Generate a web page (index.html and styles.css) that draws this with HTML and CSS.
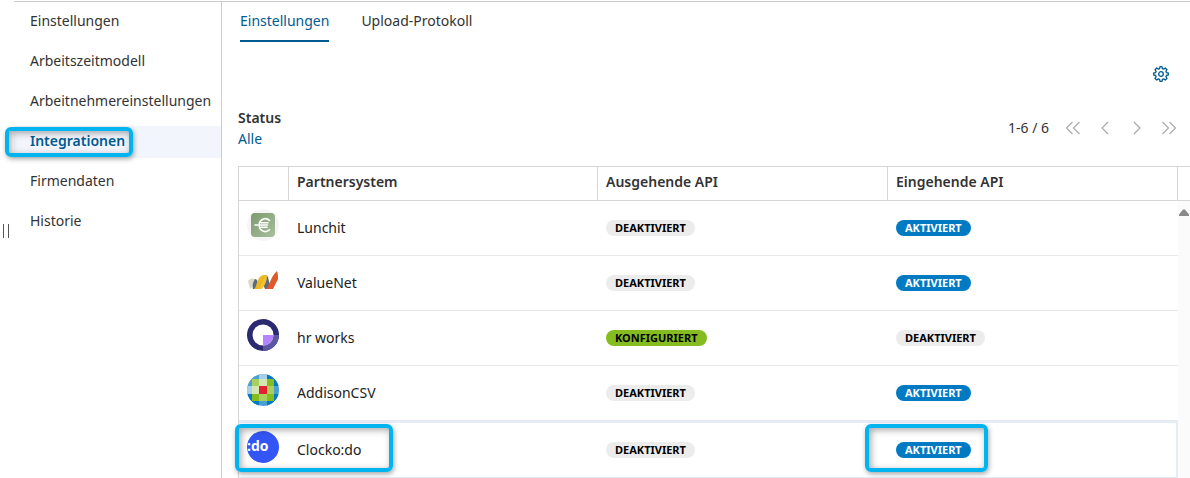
FILE: index.html
```html
<!DOCTYPE html>
<html lang="de">
<head>
<meta charset="utf-8">
<meta name="viewport" content="width=device-width, initial-scale=1">
<title>Integrationen</title>
<link rel="stylesheet" href="styles.css">
</head>
<body>
<div class="gutter"><span class="grip"></span></div>
<div class="app">
  <nav class="sidebar" aria-label="Bereiche">
    <a class="nav-item" href="#">Einstellungen</a>
    <a class="nav-item" href="#">Arbeitszeitmodell</a>
    <a class="nav-item" href="#">Arbeitnehmereinstellungen</a>
    <a class="nav-item active" href="#" aria-current="page">Integrationen<span class="marker marker-nav"></span></a>
    <a class="nav-item" href="#">Firmendaten</a>
    <a class="nav-item" href="#">Historie</a>
  </nav>
  <main class="main">
    <div class="tabs">
      <a class="tab selected" href="#">Einstellungen</a>
      <a class="tab" href="#">Upload-Protokoll</a>
    </div>
    <div class="tools">
      <button class="icon-button" type="button" aria-label="Konfigurieren">
        <svg width="16" height="16" viewBox="0 0 16 16" fill="none" stroke="currentColor" stroke-width="1.3" stroke-linejoin="round"><path d="M6.6 2.6 7 .7h2l.4 1.9 1.2.5 1.7-1.1 1.7 1.7-1.1 1.7.5 1.2 1.9.4v2l-1.9.4-.5 1.2 1.1 1.7-1.7 1.7-1.7-1.1-1.2.5-.4 1.9H7l-.4-1.9-1.2-.5L3.700 14 2 12.300l1.100-1.700-.5-1.200L.7 9V7l1.900-.4.500-1.200L2 3.700 3.700 2l1.700 1.100z"/><circle cx="8" cy="8" r="2.300"/></svg>
      </button>
    </div>
    <div class="filterbar">
      <div class="filter">
        <span class="filter-label" id="status-label">Status</span>
        <button class="filter-value" type="button" aria-describedby="status-label">Alle</button>
      </div>
      <div class="pager">
        <span class="range">1-6 / 6</span>
        <button class="page-button" type="button" aria-label="Erste Seite"><svg width="16" height="14" viewBox="0 0 16 14"><path d="M7.500 1 1.500 7l6 6M14.500 1l-6 6 6 6"/></svg></button>
        <button class="page-button" type="button" aria-label="Vorherige Seite"><svg width="16" height="14" viewBox="0 0 16 14"><path d="M11 1 5 7l6 6"/></svg></button>
        <button class="page-button" type="button" aria-label="Nächste Seite"><svg width="16" height="14" viewBox="0 0 16 14"><path d="m5 1 6 6-6 6"/></svg></button>
        <button class="page-button" type="button" aria-label="Letzte Seite"><svg width="16" height="14" viewBox="0 0 16 14"><path d="m1.500 1 6 6-6 6M8.500 1l6 6-6 6"/></svg></button>
      </div>
    </div>
    <table class="grid">
      <colgroup><col class="col-logo"><col class="col-name"><col><col><col class="col-scroll"></colgroup>
      <thead>
        <tr><th></th><th scope="col">Partnersystem</th><th scope="col">Ausgehende API</th><th scope="col">Eingehende API</th><th></th></tr>
      </thead>
      <tbody>
        <tr>
          <td class="logo"><svg width="32" height="32" viewBox="0 0 32 32"><defs><linearGradient id="lunch" x1="0" y1="0" x2="1" y2="1"><stop offset="0" stop-color="#7b9a6e"/><stop offset="1" stop-color="#a9bf9f"/></linearGradient></defs><circle cx="16" cy="16" r="16" fill="#f5f5f5"/><rect x="4" y="4" width="24" height="24" rx="4" fill="url(#lunch)"/><path d="M22.500 11.500a6 6 0 0 0-10.200 3M12.300 17.500a6 6 0 0 0 10.200 3.300M8 16h12.500M14 13.800h7M14 18.200h6" fill="none" stroke="#fff" stroke-width="1.600" stroke-linecap="round"/></svg></td>
          <td>Lunchit</td>
          <td><span class="badge">DEAKTIVIERT</span></td>
          <td><span class="badge on">AKTIVIERT</span></td>
          <td class="scroll" rowspan="5"><button class="scroll-up" type="button" aria-label="Nach oben"><svg width="10" height="7" viewBox="0 0 10 7"><path d="M4 .5h2l4 5V7H0V5.500z" fill="#8a8a8a"/></svg></button></td>
        </tr>
        <tr>
          <td class="logo"><svg width="32" height="32" viewBox="0 0 32 32"><path d="M1 17c1-2 4-3 7-2l-3 8-2 2z" fill="#dcd6c4"/><path d="M8 15c3 0 3 5 4 10H6c-1-3 0-7 2-10z" fill="#5b6b7c"/><path d="M7 25c3-2 3-12 8-13.500 2-.6 4-.5 5 0L14 24l-2 1z" fill="#efb71f"/><path d="M20 11.500c2 2 2 9 4 13.500h-6c-1-2-2-5-2-6z" fill="#5b6b7c"/><path d="m15 19 3-6 2-1.500c0 5-2 10-5 13.500h-3z" fill="#f3c22e"/><path d="M19 25c3-3 5-12 10-17l1-1c1 3 1 5 1 8l-5 10z" fill="#e0592b"/></svg></td>
          <td>ValueNet</td>
          <td><span class="badge">DEAKTIVIERT</span></td>
          <td><span class="badge on">AKTIVIERT</span></td>
        </tr>
        <tr>
          <td class="logo"><svg width="32" height="32" viewBox="0 0 32 32"><circle cx="16" cy="16" r="16" fill="#2b2a70"/><path d="M16 16h16a16 16 0 0 1-16 16z" fill="#5b57a4"/><circle cx="16" cy="16" r="10.500" fill="#fff"/><path d="M16 16h10.500A10.500 10.500 0 0 1 16 26.500z" fill="#b583ff"/></svg></td>
          <td>hr works</td>
          <td><span class="badge configured">KONFIGURIERT</span></td>
          <td><span class="badge">DEAKTIVIERT</span></td>
        </tr>
        <tr>
          <td class="logo"><svg width="32" height="32" viewBox="0 0 32 32"><defs><clipPath id="globe"><circle cx="16" cy="16" r="16"/></clipPath></defs><g clip-path="url(#globe)"><path fill="#4a9fd3" d="M0 0h32v32H0z"/><path fill="#a6cfea" d="M12 0h8v5h-8zM0 12h5v8H0z"/><path fill="#007ac3" d="M20 0h7v5h-7zM27 5h5v7h-5zM27 20h5v7h-5zM20 27h7v5h-7zM5 27h7v5H5zM0 20h5v7H0z"/><path fill="#85bc20" d="M5 5h22v22H5z"/><path fill="#d3e6b3" d="M12 5h8v7h-8zM5 12h7v8H5z"/><path fill="#a9cf5f" d="M5 5h7v7H5zM20 12h7v8h-7zM12 20h8v7h-8z"/><path fill="#e5202e" d="M12 12h8v8h-8z"/></g></svg></td>
          <td>AddisonCSV</td>
          <td><span class="badge">DEAKTIVIERT</span></td>
          <td><span class="badge on">AKTIVIERT</span></td>
        </tr>
        <tr class="focused">
          <td class="logo"><svg width="32" height="32" viewBox="0 0 32 32"><circle cx="16" cy="16" r="16" fill="#3355f5"/><text class="logo-text" x="0" y="20">:do</text></svg><span class="marker marker-partner"></span></td>
          <td>Clocko:do</td>
          <td><span class="badge">DEAKTIVIERT</span></td>
          <td><span class="badge on">AKTIVIERT</span><span class="marker marker-status"></span></td>
        </tr>
      </tbody>
    </table>
  </main>
</div>
</body>
</html>
```

FILE: styles.css
```css
* { box-sizing: border-box; }

body {
  margin: 0;
  padding-top: 1px;
  min-height: 100vh;
  display: flex;
  background: #fff;
  color: #333;
  font: 14px/20px "Noto Sans", "Open Sans", sans-serif;
}

a { color: inherit; text-decoration: none; }

button {
  margin: 0;
  padding: 0;
  border: 0;
  background: none;
  color: inherit;
  font: inherit;
  cursor: pointer;
}

svg { display: block; }

.gutter { flex: none; width: 14px; padding: 223px 0 0 3px; }
.grip { display: block; width: 6px; height: 14px; border: solid #555; border-width: 0 1px; }

.app { flex: 1; min-width: 0; display: flex; border-top: 1px solid #ccc; }

.sidebar {
  flex: none;
  width: 208px;
  padding-top: 4px;
  display: flex;
  flex-direction: column;
  gap: 8px;
  border-right: 1px solid #ccc;
}
.nav-item { position: relative; padding: 5px 0 7px 16px; white-space: nowrap; }
.nav-item.active { background: #f2f6fc; color: #005b92; font-weight: 600; }

.main { flex: 1; min-width: 0; padding-left: 16px; }

.tabs { display: flex; gap: 32px; padding-left: 2px; }
.tab { padding: 9px 0; border-bottom: 2px solid transparent; }
.tab.selected { color: #005b92; border-color: #005b92; }

.tools { display: flex; justify-content: flex-end; padding: 24px 21px 25px 0; }
.icon-button { color: #005b92; }

.filterbar { display: flex; align-items: center; justify-content: space-between; padding: 0 5px 17px 0; }
.filter { display: flex; flex-direction: column; align-items: flex-start; line-height: 21px; }
.filter-label { font-weight: 600; }
.filter-value { color: #005b92; }

.pager { display: flex; align-items: center; }
.range { margin-right: 8px; }
.page-button { width: 32px; height: 32px; display: grid; place-items: center; }
.page-button path { fill: none; stroke: #aaa; stroke-width: 1.2; }

.grid {
  width: 100%;
  table-layout: fixed;
  border-collapse: separate;
  border-spacing: 0;
  border-left: 1px solid #d6d6d6;
}
.col-logo { width: 50px; }
.col-name { width: 309px; }
.col-scroll { width: 12px; }

.grid th {
  height: 35px;
  padding: 5px 8px 8px;
  border: solid #d6d6d6;
  border-width: 1px 1px 1px 0;
  font-weight: 600;
  text-align: left;
  vertical-align: top;
}
.grid th:last-child { padding: 0; border-right: 0; }

.grid td { height: 55px; padding: 0 8px; border-bottom: 1px solid #e8e8e8; position: relative; color: #222; }
.grid .logo { padding-top: 8px; vertical-align: top; }
.grid .scroll { padding: 8px 0 0 1px; background: #fbfbfb; border: 0; vertical-align: top; }
.scroll-up { display: block; }

.grid .focused td { height: 57px; border-top: 2px solid #e2eefa; border-bottom-color: #e2eefa; }
.grid .focused td:last-child { border-right: 2px solid #e2eefa; }

.logo-text { fill: #fff; font: 700 14px "Open Sans", sans-serif; }

.badge {
  display: block;
  width: fit-content;
  padding: 0 9px;
  border-radius: 8px;
  background: #ececec;
  color: #000;
  font-size: 11px;
  font-weight: 700;
  line-height: 16px;
}
.badge.on { background: #007ac3; color: #fff; }
.badge.configured { background: #85bc20; }

.marker {
  position: absolute;
  z-index: 1;
  border: 4px solid #00b4f0;
  border-radius: 6px;
  box-shadow: 1px 2px 5px rgba(0, 0, 0, .35), inset 2px 2px 7px rgba(0, 0, 0, .35);
  pointer-events: none;
}
.marker-nav { left: -9px; top: 1px; width: 128px; height: 30px; }
.marker-partner { left: -4px; top: 1px; width: 158px; height: 48px; }
.marker-status { left: -23px; top: 1px; width: 123px; height: 48px; }
```
